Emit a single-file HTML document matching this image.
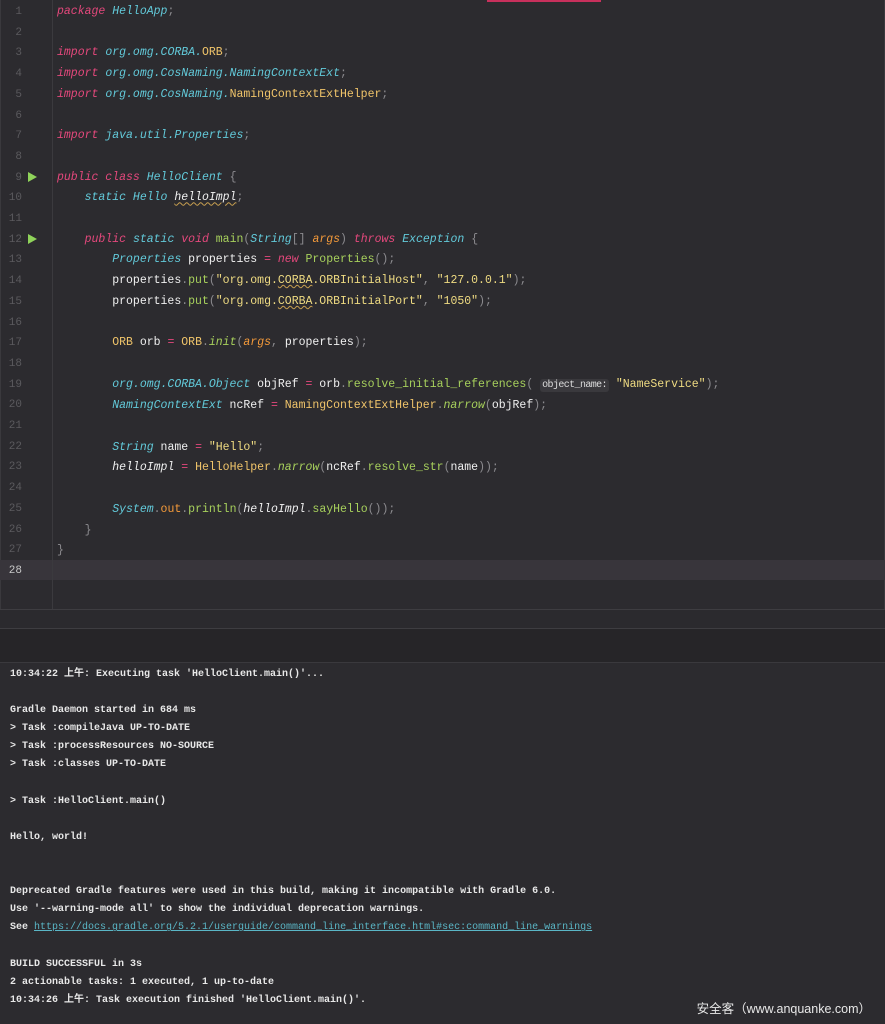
<!DOCTYPE html>
<html><head><meta charset="utf-8"><style>
*{margin:0;padding:0;box-sizing:border-box}
body{width:885px;height:1024px;background:#2c2b2f;position:relative;overflow:hidden;font-family:"Liberation Mono","Noto Sans CJK SC",monospace}
.ed{position:absolute;left:0;top:0;width:885px;height:610px;background:#2c2b2f;border-left:1px solid #3a393d;border-right:1px solid #3a393d}
.gut{position:absolute;left:52px;top:0;width:1px;height:610px;background:#3b3a3e}
.cur{position:absolute;left:0;top:560px;width:885px;height:20px;background:#38353b}
.ln{position:absolute;left:0;top:2px;width:22px;text-align:right;font-size:11px;line-height:20.7px;color:#5b5a5e;white-space:pre}
pre{position:absolute;left:57px;top:2px;font-family:"Liberation Mono",monospace;font-size:11.5px;line-height:20.7px;color:#f0f0f0;font-weight:normal}
.k{color:#e4487c;font-style:italic}
.t{color:#62c9d9;font-style:italic}
.y{color:#f0c46a}
.s{color:#efdb82}
.g{color:#a7d05c}
.o{color:#f49a3a;font-style:italic}
.oo{color:#f49a3a}
.p{color:#8c8b8f}
.i{font-style:italic}
.u{text-decoration:underline wavy #c8a050;text-decoration-thickness:1px}
.hint{background:#3a393d;color:#ddd;padding:1px 2px;border-radius:3px;font-size:10px;letter-spacing:-0.6px}
.run{position:absolute;left:28px;width:0;height:0;border-left:9px solid #8fd35a;border-top:5px solid transparent;border-bottom:5px solid transparent}
.bar{position:absolute;left:487px;top:0;width:114px;height:2px;background:#c8305c}
.l1{position:absolute;left:0;top:609px;width:885px;height:1px;background:#3e3d41}
.band{position:absolute;left:0;top:610px;width:885px;height:18px;background:#2b2a2e}
.l2{position:absolute;left:0;top:628px;width:885px;height:1px;background:#3e3d41}
.dark{position:absolute;left:0;top:629px;width:885px;height:33px;background:#262528}
.l3{position:absolute;left:0;top:662px;width:885px;height:1px;background:#3a393d}
.con{position:absolute;left:10px;top:666px;font-family:"Liberation Mono","Noto Sans CJK SC",monospace;font-size:10px;line-height:18.1px;color:#e8e8e8;white-space:pre;font-weight:bold}
.con a{color:#5ab6c6;text-decoration:underline;font-weight:normal}
.wm{position:absolute;right:14px;top:998px;font-family:"Liberation Sans","Noto Sans CJK SC",sans-serif;font-size:12.5px;color:#e8e8e8}
</style></head><body>
<div class="ed"></div>
<div class="cur"></div>
<div class="gut"></div>
<div class="bar"></div>
<div class="ln">1
2
3
4
5
6
7
8
9
10
11
12
13
14
15
16
17
18
19
20
21
22
23
24
25
26
27
<span style="color:#c8c8c8">28</span></div>
<div class="run" style="top:172px"></div>
<div class="run" style="top:234px"></div>
<pre><span class="k">package</span> <span class="t">HelloApp</span><span class="p">;</span>

<span class="k">import</span> <span class="t">org.omg.CORBA.</span><span class="y">ORB</span><span class="p">;</span>
<span class="k">import</span> <span class="t">org.omg.CosNaming.NamingContextExt</span><span class="p">;</span>
<span class="k">import</span> <span class="t">org.omg.CosNaming.</span><span class="y">NamingContextExtHelper</span><span class="p">;</span>

<span class="k">import</span> <span class="t">java.util.Properties</span><span class="p">;</span>

<span class="k">public class</span> <span class="t">HelloClient</span> <span class="p">{</span>
    <span class="t">static Hello</span> <span class="i u">helloImpl</span><span class="p">;</span>

    <span class="k">public</span> <span class="t">static</span> <span class="k">void</span> <span class="g">main</span><span class="p">(</span><span class="t">String</span><span class="p">[]</span> <span class="o">args</span><span class="p">)</span> <span class="k">throws</span> <span class="t">Exception</span> <span class="p">{</span>
        <span class="t">Properties</span> properties <span class="k" style="font-style:normal">=</span> <span class="k">new</span> <span class="g">Properties</span><span class="p">();</span>
        properties<span class="p">.</span><span class="g">put</span><span class="p">(</span><span class="s">"org.omg.<span class="u">CORBA</span>.ORBInitialHost"</span><span class="p">,</span> <span class="s">"127.0.0.1"</span><span class="p">);</span>
        properties<span class="p">.</span><span class="g">put</span><span class="p">(</span><span class="s">"org.omg.<span class="u">CORBA</span>.ORBInitialPort"</span><span class="p">,</span> <span class="s">"1050"</span><span class="p">);</span>

        <span class="y">ORB</span> orb <span class="k" style="font-style:normal">=</span> <span class="y">ORB</span><span class="p">.</span><span class="g i">init</span><span class="p">(</span><span class="o">args</span><span class="p">,</span> properties<span class="p">);</span>

        <span class="t">org.omg.CORBA.Object</span> objRef <span class="k" style="font-style:normal">=</span> orb<span class="p">.</span><span class="g">resolve_initial_references</span><span class="p">(</span> <span class="hint">object_name:</span> <span class="s">"NameService"</span><span class="p">);</span>
        <span class="t">NamingContextExt</span> ncRef <span class="k" style="font-style:normal">=</span> <span class="y">NamingContextExtHelper</span><span class="p">.</span><span class="g i">narrow</span><span class="p">(</span>objRef<span class="p">);</span>

        <span class="t">String</span> name <span class="k" style="font-style:normal">=</span> <span class="s">"Hello"</span><span class="p">;</span>
        <span class="i">helloImpl</span> <span class="k" style="font-style:normal">=</span> <span class="y">HelloHelper</span><span class="p">.</span><span class="g i">narrow</span><span class="p">(</span>ncRef<span class="p">.</span><span class="g">resolve_str</span><span class="p">(</span>name<span class="p">));</span>

        <span class="t">System</span><span class="p">.</span><span class="oo">out</span><span class="p">.</span><span class="g">println</span><span class="p">(</span><span class="i">helloImpl</span><span class="p">.</span><span class="g">sayHello</span><span class="p">());</span>
    <span class="p">}</span>
<span class="p">}</span>
</pre>
<div class="l1"></div><div class="band"></div><div class="l2"></div><div class="dark"></div><div class="l3"></div>
<div class="con">10:34:22 上午: Executing task 'HelloClient.main()'...

Gradle Daemon started in 684 ms
&gt; Task :compileJava UP-TO-DATE
&gt; Task :processResources NO-SOURCE
&gt; Task :classes UP-TO-DATE

&gt; Task :HelloClient.main()

Hello, world!


Deprecated Gradle features were used in this build, making it incompatible with Gradle 6.0.
Use '--warning-mode all' to show the individual deprecation warnings.
See <a>https://docs.gradle.org/5.2.1/userguide/command_line_interface.html#sec:command_line_warnings</a>

BUILD SUCCESSFUL in 3s
2 actionable tasks: 1 executed, 1 up-to-date
10:34:26 上午: Task execution finished 'HelloClient.main()'.</div>
<div class="wm">安全客（www.anquanke.com）</div>
</body></html>
